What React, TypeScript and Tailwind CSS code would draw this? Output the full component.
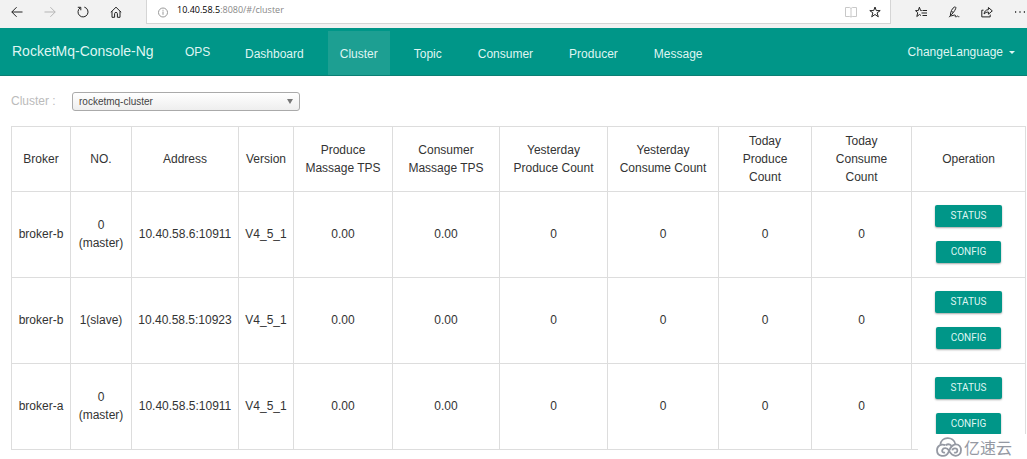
import React from 'react';

interface Broker {
  name: string;
  no: string[];
  address: string;
  version: string;
}

const brokers: Broker[] = [
  { name: 'broker-b', no: ['0', '(master)'], address: '10.40.58.6:10911', version: 'V4_5_1' },
  { name: 'broker-b', no: ['1(slave)'], address: '10.40.58.5:10923', version: 'V4_5_1' },
  { name: 'broker-a', no: ['0', '(master)'], address: '10.40.58.5:10911', version: 'V4_5_1' },
];

const columns = [
  { lines: ['Broker'], width: 'w-[59px]' },
  { lines: ['NO.'], width: 'w-[61px]' },
  { lines: ['Address'], width: 'w-[107px]' },
  { lines: ['Version'], width: 'w-[55px]' },
  { lines: ['Produce', 'Massage TPS'], width: 'w-[99px]' },
  { lines: ['Consumer', 'Massage TPS'], width: 'w-[107px]' },
  { lines: ['Yesterday', 'Produce Count'], width: 'w-[108px]' },
  { lines: ['Yesterday', 'Consume Count'], width: 'w-[111px]' },
  { lines: ['Today', 'Produce', 'Count'], width: 'w-[93px]' },
  { lines: ['Today', 'Consume', 'Count'], width: 'w-[100px]' },
  { lines: ['Operation'], width: 'w-[114px]' },
];

const counters = ['0.00', '0.00', '0', '0', '0', '0'];

const navItems = ['Dashboard', 'Cluster', 'Topic', 'Consumer', 'Producer', 'Message'];

function Icon({ children, label }: { children: React.ReactNode; label: string }) {
  return (
    <svg
      viewBox="0 0 12 12"
      className="size-3"
      fill="none"
      stroke="currentColor"
      strokeWidth="1"
      role="img"
      aria-label={label}
    >
      {children}
    </svg>
  );
}

function BrowserBar() {
  return (
    <div className="flex h-7 items-start bg-[#f2f2f2] text-[#222]">
      <div className="flex h-6 w-[146px] shrink-0 items-center gap-[21px] pl-[11px]">
        <button className="shrink-0">
          <Icon label="Back">
            <path d="M11.5 6H.8M5.6 1.2 .8 6l4.8 4.8" />
          </Icon>
        </button>
        <button className="shrink-0 text-[#b5b5b5]">
          <Icon label="Forward">
            <path d="M.5 6h10.7M6.4 1.2 11.2 6l-4.8 4.8" />
          </Icon>
        </button>
        <button className="shrink-0">
          <Icon label="Refresh">
            <path d="M7.3 1.1A5 5 0 1 1 3.2 1.8M.8 1.3h3v3" />
          </Icon>
        </button>
        <button className="shrink-0">
          <Icon label="Home">
            <path d="M.8 6.3 6 1.2l5.2 5.1M2 5.2v6.1h2.6V7.6c0-1.6 2.8-1.6 2.8 0v3.7H10V5.2" />
          </Icon>
        </button>
      </div>
      <div className="flex h-6 flex-1 items-center border-x border-b border-[#d5d5d5] bg-white pr-[9px] pl-[10px]">
        <span className="text-[#999]">
          <Icon label="Site information">
            <circle cx="6" cy="6.5" r="4.5" />
            <path d="M6 5.5v3.3M6 3.8v1" />
          </Icon>
        </span>
        <div className="flex-1 pb-1 pl-2 font-['Open_Sans',sans-serif] text-[9px] leading-4 text-[#888]">
          <span className="font-medium text-black">10.40.58.5</span>:8080/#/cluster
        </div>
        <div className="flex items-center gap-[12px]">
          <button className="text-[#c8c8c8]">
            <Icon label="Reading view">
              <path d="M.5 1.5h4.2L6 2.5l1.3-1h4.2v9H7.3L6 11l-1.3-.5H.5zM6 2.5V11" />
            </Icon>
          </button>
          <button>
            <Icon label="Favorite">
              <path d="m6 1 1.3 3.6h3.9L8.1 6.9l1.2 3.9L6 8.5l-3.3 2.3 1.2-3.9L.8 4.6h3.9z" />
            </Icon>
          </button>
        </div>
      </div>
      <div className="flex h-6 w-[136px] shrink-0 items-center gap-[21px] overflow-hidden pl-6">
        <button className="shrink-0">
          <Icon label="Hub">
            <path d="M6.8 4.6H5.6L4.4 1.2 3.3 4.6H.5l2.2 2.2-.9 3.7 2.7-2 1.5 1M7.5 4.5H12M6.5 7H12M7.5 9.5H12" />
          </Icon>
        </button>
        <button className="shrink-0">
          <Icon label="Notes">
            <path d="M2.3 9.8C2.5 6 4 2 6.6 1c1.3-.4 1.5.8 1 1.8C6.7 5 4.5 7.7 2.3 9.8L1.2 11.2M3.6 5.5l1.7.9M2.3 9.9c2.1.1 3.7-1.1 4.8-.9.9.3-.3 1.8.6 2 .8.1 1.1-1.1 1.9-.9.6.1.6.8 1.7.6" />
          </Icon>
        </button>
        <button className="shrink-0">
          <Icon label="Share">
            <path d="M2.5 4.2H.8v6.7h8.4V8.6M3.1 8C3.3 5.5 4.8 3.7 7.4 3.7V1.5l3.9 3.4-3.9 3.3V6C5.7 6 4.3 6.6 3.1 8z" />
          </Icon>
        </button>
        <button className="shrink-0">
          <Icon label="More">
            <path d="M1 6h1.2M5.4 6h1.2M9.8 6H11" strokeWidth="1.3" />
          </Icon>
        </button>
      </div>
    </div>
  );
}

function Navbar() {
  return (
    <nav className="flex h-12 items-stretch border-b border-[#0b7f74] bg-[#009688] text-[12px] leading-[18px] text-[#dff5f2]">
      <a href="#/" className="w-[173px] pt-[14px] pl-3 text-[14px]">
        RocketMq-Console-Ng
      </a>
      <a href="#/ops" className="w-[60px] pt-[15px] pl-3">
        OPS
      </a>
      <div className="flex gap-3 pt-[3px]">
        {navItems.map((item) => (
          <a
            key={item}
            href={`#/${item.toLowerCase()}`}
            className={`px-3 pt-[14px] ${item === 'Cluster' ? 'bg-[#1d9f92]' : ''}`}
          >
            {item}
          </a>
        ))}
      </div>
      <button className="ml-auto flex items-center gap-1.5 self-start pt-[15px] pr-3">
        ChangeLanguage
        <svg viewBox="0 0 6 3" className="h-[3px] w-1.5" fill="currentColor">
          <path d="M0 0h6L3 3z" />
        </svg>
      </button>
    </nav>
  );
}

function ActionButton({ children, width }: { children: string; width: string }) {
  return (
    <button
      className={`${width} h-[22px] rounded-[2px] bg-[#009688] font-[Roboto,sans-serif] text-[10px] leading-[22px] text-[#dff5f2] shadow-[0_1px_2px_rgba(0,0,0,0.35)]`}
    >
      {children}
    </button>
  );
}

function ClusterTable() {
  return (
    <table className="w-full table-fixed border-collapse text-center">
      <thead>
        <tr className="h-[65px]">
          {columns.map((col) => (
            <th
              key={col.lines.join(' ')}
              className={`${col.width} border border-[#ddd] p-0 font-normal whitespace-nowrap`}
            >
              {col.lines.map((line) => (
                <div key={line}>{line}</div>
              ))}
            </th>
          ))}
        </tr>
      </thead>
      <tbody>
        {brokers.map((broker) => (
          <tr key={broker.address} className="h-[86px]">
            <td className="border border-[#ddd] pb-0.5">{broker.name}</td>
            <td className="border border-[#ddd] pb-0.5">
              {broker.no.map((line) => (
                <div key={line}>{line}</div>
              ))}
            </td>
            <td className="border border-[#ddd] pb-0.5">{broker.address}</td>
            <td className="border border-[#ddd] pb-0.5">{broker.version}</td>
            {counters.map((value, i) => (
              <td key={i} className="border border-[#ddd] pb-0.5">
                {value}
              </td>
            ))}
            <td className="border border-[#ddd] pb-0.5">
              <div className="flex flex-col items-center gap-[14px]">
                <ActionButton width="w-[67px]">STATUS</ActionButton>
                <ActionButton width="w-[65px]">CONFIG</ActionButton>
              </div>
            </td>
          </tr>
        ))}
      </tbody>
    </table>
  );
}

function Watermark() {
  return (
    <div className="absolute right-0 bottom-0 flex h-[25px] w-[109px] items-center gap-0.5 bg-white pl-[18px] text-[#9599a3]">
      <svg viewBox="0 0 26 20" className="h-5 w-[26px]" fill="none" stroke="currentColor" strokeWidth="1.8">
        <path d="M4.4 7.8C5-.6 17.6-1.4 19.4 7.4" />
        <path d="M9.4 8.2C4.8 6.4 1 9 1 13.2c0 6.6 9 7.6 11.4 2.2 1.6-3.8 3-8 7.4-8 6.8 0 7 11.4 0 11.4-3.8 0-5.6-2.8-7-5.4-1.6-3-5.4-3-6.4-.6-.8 2 .8 3.4 2.6 2.6" />
        <path d="M16.4 13.4c.2-2.6 5-2.8 5 .2 0 2-2 2.6-3.2 1.6M9.6 8.4c2-1.6 4.2-1.4 6 .4" />
      </svg>
      <span className="font-['Noto_Sans_CJK_SC',sans-serif] text-[16px] leading-5">亿速云</span>
    </div>
  );
}

export default function App() {
  return (
    <div className="relative bg-white font-['Liberation_Sans',Arial,sans-serif] text-[12px] leading-[18px] text-[#333]">
      <BrowserBar />
      <Navbar />
      <main className="pt-4 pr-px pb-[9px] pl-[11px]">
        <div className="mb-4 flex h-[18px] items-center">
          <label htmlFor="cluster" className="w-[61px] text-[#bbb]">
            Cluster :
          </label>
          <div className="relative">
            <select
              id="cluster"
              className="block h-[19px] w-[228px] appearance-none rounded-[3px] border border-[#aaa] bg-linear-to-b from-white to-[#eee] pl-1.5 text-[10px] leading-[18px] text-[#444]"
            >
              <option>rocketmq-cluster</option>
            </select>
            <svg
              viewBox="0 0 6 5"
              className="pointer-events-none absolute top-[7px] right-[7px] h-[5px] w-1.5"
              fill="#777"
            >
              <path d="M0 0h6L3 5z" />
            </svg>
          </div>
        </div>
        <ClusterTable />
      </main>
      <Watermark />
    </div>
  );
}
